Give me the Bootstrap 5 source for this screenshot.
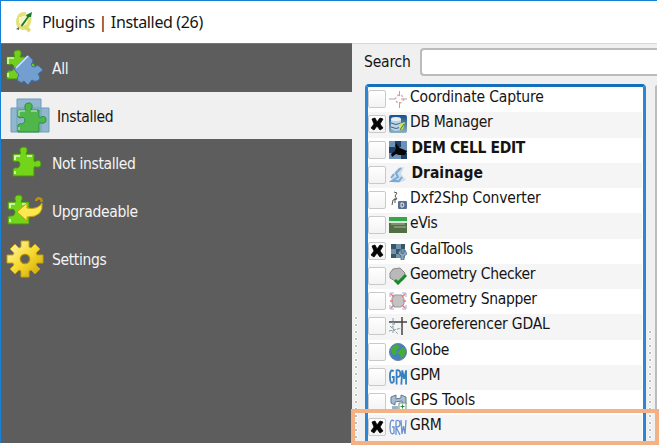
<!DOCTYPE html>
<html lang="en">
<head>
<meta charset="utf-8">
<title>Plugins | Installed (26)</title>
<link rel="stylesheet" href="https://cdn.jsdelivr.net/npm/bootstrap@5.3.0/dist/css/bootstrap.min.css">
<style>
body{width:659px;height:445px;font:15.5px/20px "DejaVu Sans Condensed","DejaVu Sans","Noto Sans",sans-serif;font-stretch:condensed;letter-spacing:-.35px;color:#151515;background:#fff}
.window{width:657px;height:443px;border-left:1.5px solid #1580d5;border-top:1px solid #1580d5}
.titlebar{height:42px;padding-left:13px;font:16px/20px "Noto Sans","Open Sans",sans-serif}
.titlebar svg{margin-right:7px}
.side{width:351px;background:#5d5d5d;border-top:1px solid #777;color:#f4f4f4}
.side-item{height:47.7px;padding-left:5px}
.side-item span{padding-top:2px}
.side-item.selected{background:#f0f0f0;color:#151515;padding-left:9px}
.pane{background:#f0f0f0;border-top:1px solid #d8d8d8}
.search{height:37px;padding:0 0 1px 12px}
.search label{width:56px;letter-spacing:-.2px}
.search input{height:28px;border:2px solid #bbb;border-right:0;border-radius:4px 0 0 4px;background:#fff;padding:0 6px;outline:0;min-width:0}
.grip{width:13px;padding:235px 0 0 2px}
.grip.end{width:9px;padding:249px 0 0 2px}
.dots{width:4px;height:100%;background:radial-gradient(circle at 2px 2px,#bcbcbc 1.3px,#fff 1.5px,transparent 2.2px) 0 0/4px 7px}
.plugins{width:281px;margin-top:3px;border:3px solid #2d86d3;border-top-color:#146fbd;border-bottom:0;border-radius:4px 4px 0 0;background:#fff;padding-right:1px}
.plugin{height:25.25px;padding-bottom:1px}
.plugin:nth-child(even){background:#f5f5f5}
.tick{width:18px;height:18px;border:1.5px solid #c9c9c9;border-radius:2px;background:linear-gradient(#fff,#f3f3f3);margin:0 3px 0 0;flex:none}
.tick svg{display:block;margin:1px}
.plugin>svg{flex:none;margin-right:3px}
.plugin span,.side-item span,.titlebar span,.search label{white-space:nowrap}
.plugin span{position:relative;top:-2px}
.plugin .fw-bold{margin-left:1.5px}
.details{width:2px;margin-top:4px;border-left:2px solid #bcbcbc;border-top:1px solid #bcbcbc;border-radius:4px 0 0 0}
.highlight{left:351px;top:409px;width:308px;height:36px;border:4px solid #f4b183}
</style>
<script src="https://cdn.jsdelivr.net/npm/bootstrap@5.3.0/dist/js/bootstrap.bundle.min.js"></script>
</head>
<body class="position-relative overflow-hidden m-0">
<svg width="0" height="0" class="position-absolute">
<defs>
<path id="piece" d="M2 8H9Q10 7 9 6Q8 1 13 1Q17 1 16 6L15 8H23V15Q24 16 25 15Q30 13 30 18Q30 22 25 21Q23 20 23 22V30H2V23Q4 21 6 22Q9 21 9 18Q8 14 4 16L2 15Z"/>
<linearGradient id="gold" x1="0" y1="0" x2="1" y2="1"><stop offset="0" stop-color="#fff8bf"/><stop offset=".5" stop-color="#f7da30"/><stop offset="1" stop-color="#c9a000"/></linearGradient>
<linearGradient id="navy" x2="0" y2="1"><stop stop-color="#16508d"/><stop offset="1" stop-color="#8db1bf"/></linearGradient>
<path id="x" d="M2 2L5 1L7 5L10 1L13 2L10 7L13 11L10 13L7 9L4 13L1 11L4 7Z" fill="#050505" stroke="#050505" stroke-width=".8"/>
</defs>
</svg>
<main class="window d-flex flex-column">
<header class="titlebar d-flex align-items-center flex-shrink-0">
<svg width="21" height="23" viewBox="0 0 21 23"><path d="M12 3Q5 2 4 9Q3 16 8 17Q13 18 15 12Q17 6 14 4" fill="#f6f5c4" stroke="#e4e276" stroke-width="3.6"/><path d="M10 15L16 20" stroke="#dede6e" stroke-width="3.6"/><path d="M7 14L13 6L12 4L18 1L17 6L15 6L8 16Z" fill="#187a32"/><path d="M2 18L5 16L5 19Z" fill="#526f52"/><path d="M6 6L6 12" stroke="#fffbcf" stroke-width="2"/></svg>
<span style="letter-spacing:-.35px">Plugins | Installed (26)</span>
</header>
<div class="d-flex flex-grow-1 overflow-hidden">
<nav class="side flex-shrink-0">
<div class="side-item d-flex align-items-center">
<svg width="38" height="38" viewBox="0 0 38 38"><use href="#piece" transform="translate(-1 0)" fill="#72cf1c" stroke="#47920d"/><path d="M2 15V9H8M2 24V28" fill="none" stroke="#d9f6b6" stroke-width="1.7"/><path d="M8 20L22 6L26 10Q28 12 26 14Q24 18 29 18Q31 15 33 17L37 21L32 25Q36 30 31 32Q28 33 26 31L22 36L18 32Q16 35 12 32Q10 29 13 26Z" fill="#729fcf" stroke="#3f6fae"/><path d="M10 19L22 7" stroke="#d4e6fa" stroke-width="1.7"/></svg>
<span class="ms-2">All</span></div>
<div class="side-item selected d-flex align-items-center">
<svg width="40" height="35" viewBox="0 0 40 35"><path d="M7 1H31V10H39V34H1V10H7Z" fill="#91b7d0" stroke="#6f9eb8"/><path d="M7 10H31V34M7 10V34" fill="none" stroke="#6f9eb8"/><use href="#piece" transform="translate(6 4)" fill="#4eb64a" stroke="#2f8e43"/><path d="M9 18V13H15M21 13H27M9 29V32" fill="none" stroke="#a9dcb0" stroke-width="1.5"/></svg>
<span style="margin-left:7px">Installed</span></div>
<div class="side-item d-flex align-items-center">
<svg width="38" height="34" viewBox="0 0 38 34"><g transform="translate(5 0)"><use href="#piece" fill="#72d51a" stroke="#47920d"/><path d="M4 14V10H9M16 10H21M4 25V28" fill="none" stroke="#e2facb" stroke-width="1.7"/></g></svg>
<span class="ms-2">Not installed</span></div>
<div class="side-item d-flex align-items-center">
<svg width="38" height="34" viewBox="0 0 38 34"><use href="#piece" fill="#72d51a" stroke="#47920d"/><path d="M4 14V10H9M16 10H21M4 25V28" fill="none" stroke="#e2facb" stroke-width="1.7"/><path d="M30 7Q31 3 35 5L36 8" fill="none" stroke="#bc9208" stroke-width="2.5"/><path d="M11 18L21 9V14Q32 16 36 9Q38 23 21 23V27Z" fill="#fce94f" stroke="#c79e0a"/></svg>
<span class="ms-2">Upgradeable</span></div>
<div class="side-item d-flex align-items-center">
<svg width="38" height="38" viewBox="-19 -19 38 38"><g fill="url(#gold)" stroke="#c9a10a"><path d="M-4 -12L-4 -18H4L4 -12L6 -11L10 -15L15 -10L11 -6L12 -4H18V4H12L11 6L15 10L10 15L6 11L4 12V18H-4V12L-6 11L-10 15L-15 10L-11 6L-12 4H-18V-4H-12L-11 -6L-15 -10L-10 -15L-6 -11Z"/></g><circle r="4.7" fill="#5d5d5d" stroke="#b18c08" stroke-width="1.3"/></svg>
<span class="ms-2">Settings</span></div>
</nav>
<section class="pane flex-grow-1 d-flex flex-column overflow-hidden">
<div class="search d-flex align-items-center flex-shrink-0"><label for="q">Search</label><input id="q" class="flex-grow-1"></div>
<div class="d-flex flex-grow-1 overflow-hidden">
<div class="grip flex-shrink-0"><div class="dots"></div></div>
<div class="plugins flex-shrink-0">
<div class="plugin d-flex align-items-center"><i class="tick"></i><svg width="18" height="18"><path d="M0 9H6M12 9H18M10.500 1V6M10.500 12V18" stroke="#aaa"/><circle cx="10.500" cy="9" r="4" fill="none" stroke="#e5a4a0" stroke-dasharray="2 2" stroke-width="1.5"/></svg><span style="letter-spacing:-.15px">Coordinate Capture</span></div>
<div class="plugin d-flex align-items-center"><i class="tick"><svg width="14" height="14"><use href="#x"/></svg></i><svg width="18" height="18"><rect width="18" height="18" rx="2" fill="url(#navy)"/><path d="M2 4V14Q7 18 12 14V4" fill="#bdd3e1"/><ellipse cx="7" cy="4" rx="5" ry="2" fill="#e5f0f5"/><path d="M2 8Q7 11 12 8M2 12Q7 15 12 12" fill="none" stroke="#38678c"/><path d="M10 16V9L16 7L14 14Z" fill="#d5df62"/><path d="M11 15L15 9" stroke="#397b38"/></svg><span>DB Manager</span></div>
<div class="plugin d-flex align-items-center"><i class="tick"></i><svg width="18" height="18"><path d="M0 0H18V18H0Z" fill="#6d92ba"/><path d="M6 0H12V6H6ZM0 6H6V12H0ZM12 12H18V18H12Z" fill="#1e416b"/><path d="M7 2L9 5L11 7L18 10L16 14L13 14L10 14L7 13L3 16L2 13L6 10Z" fill="#060606"/></svg><span class="fw-bold">DEM CELL EDIT</span></div>
<div class="plugin d-flex align-items-center"><i class="tick"></i><svg width="18" height="18"><path d="M9 2L15 1L12 8L17 14L9 17L2 16L4 8Z" fill="#d0dde6"/><path d="M12 2L7 7L9 11L3 15H10L13 11M5 8L2 12" fill="none" stroke="#77abd9" stroke-width="2"/></svg><span class="fw-bold" style="letter-spacing:0">Drainage</span></div>
<div class="plugin d-flex align-items-center"><i class="tick"></i><svg width="18" height="18"><path d="M5 1L8 2L6 5L8 8L4 9L3 14M6 7V12" fill="none" stroke="#555"/><rect x="9" y="10" width="9" height="8" rx="1" fill="#59708e"/><path d="M12 12V16H14Q16 14 14 12Z" fill="none" stroke="#e7edf5"/></svg><span style="letter-spacing:-.15px">Dxf2Shp Converter</span></div>
<div class="plugin d-flex align-items-center"><i class="tick"></i><svg width="18" height="18"><path d="M0 1H18V17H0Z" fill="#526f43"/><path d="M0 1H18V5H0Z" fill="#35a746"/><path d="M0 5H18V7H0Z" fill="#d4e6d4"/><path d="M2 8H16M5 11H17" stroke="#8fa084" stroke-width="1.5"/></svg><span>eVis</span></div>
<div class="plugin d-flex align-items-center"><i class="tick"><svg width="14" height="14"><use href="#x"/></svg></i><svg width="18" height="18"><path d="M2 2H16V16H2Z" fill="#7292a8"/><path d="M2 2H7V7H2ZM12 2H16V7H12ZM7 7H12V12H7ZM2 12H7V16H2Z" fill="#36566f"/><path d="M12 7V11L14 12L16 8L18 12L15 14V18H12V14L9 11Z" fill="#8fa9bb" stroke="#42627b" stroke-width=".7"/></svg><span>GdalTools</span></div>
<div class="plugin d-flex align-items-center"><i class="tick"></i><svg width="18" height="18"><path d="M4 2L11 1L16 6L14 13L8 15L1 11L1 6Z" fill="#b9b9b9" stroke="#888"/><path d="M6 13L9 16L17 8" fill="none" stroke="#168b25" stroke-width="3"/></svg><span>Geometry Checker</span></div>
<div class="plugin d-flex align-items-center"><i class="tick"></i><svg width="18" height="18"><path d="M5 3H13L15 7V12L12 15H5L3 11V6Z" fill="#c3c3c3" stroke="#999"/><path d="M1 5V1H5M13 1H17V5M1 13V17H5M13 17H17V13" fill="none" stroke="#aaa4e0"/><path d="M2 2L5 5M16 2L13 5M1 9H4M14 9H17M2 16L5 13M16 16L13 13" stroke="#e87880" stroke-width="1.5"/></svg><span>Geometry Snapper</span></div>
<div class="plugin d-flex align-items-center"><i class="tick"></i><svg width="18" height="18"><path d="M0 5H18M13 0V18" stroke="#444" stroke-width="1.5"/><path d="M4 1V17M0 14L13 11M1 9L9 17M6 6L3 10" fill="none" stroke="#8d9ca6" stroke-dasharray="3 1"/></svg><span style="letter-spacing:-.2px">Georeferencer GDAL</span></div>
<div class="plugin d-flex align-items-center"><i class="tick"></i><svg width="18" height="18"><circle cx="9" cy="9" r="8.500" fill="#477fbd" stroke="#667caa"/><path d="M2 5L7 1L11 3L9 6L7 8L8 11L5 12L2 9ZM11 7L14 4L17 8L15 13L12 16L11 12L8 10Z" fill="#43ad38"/></svg><span>Globe</span></div>
<div class="plugin d-flex align-items-center"><i class="tick"></i><svg width="18" height="18" viewBox="0 0 19 18"><path d="M5 3Q1 0 1 8Q1 18 5 14V9H3M8 17V2Q12 1 12 6Q12 9 8 9M13 17L14 2L16 11L18 2V17" fill="none" stroke="#3880bd" stroke-width="1.9"/></svg><span>GPM</span></div>
<div class="plugin d-flex align-items-center"><i class="tick"></i><svg width="18" height="18"><path d="M2 4L7 2V6L12 5V2L17 4V11L13 12V8L6 9V12L2 10Z" fill="#a6bed7" stroke="#66788b"/><path d="M3 13H9V17H3Z" fill="#9db2c9"/><path d="M10 10H17V17H10Z" fill="#fff" stroke="#6c9275"/><path d="M13.500 11.500V15.500M11.500 13.500H15.500" stroke="#2f8b40"/></svg><span style="letter-spacing:-.15px">GPS Tools</span></div>
<div class="plugin d-flex align-items-center"><i class="tick"><svg width="14" height="14"><use href="#x"/></svg></i><svg width="18" height="18"><path d="M5 3Q1 0 1 9Q1 18 5 15V9H3M7 17V3Q11 1 11 6Q11 9 7 9L11 17M12 2L13 16L14.500 8L16 16L17 2" fill="none" stroke="#6c91d0" stroke-width="1.3"/></svg><span>GRM</span></div>
</div>
<div class="grip end flex-shrink-0"><div class="dots"></div></div>
<div class="details flex-shrink-0"></div>
</div>
</section>
</div>
</main>
<div class="highlight position-absolute"></div>
</body>
</html>
